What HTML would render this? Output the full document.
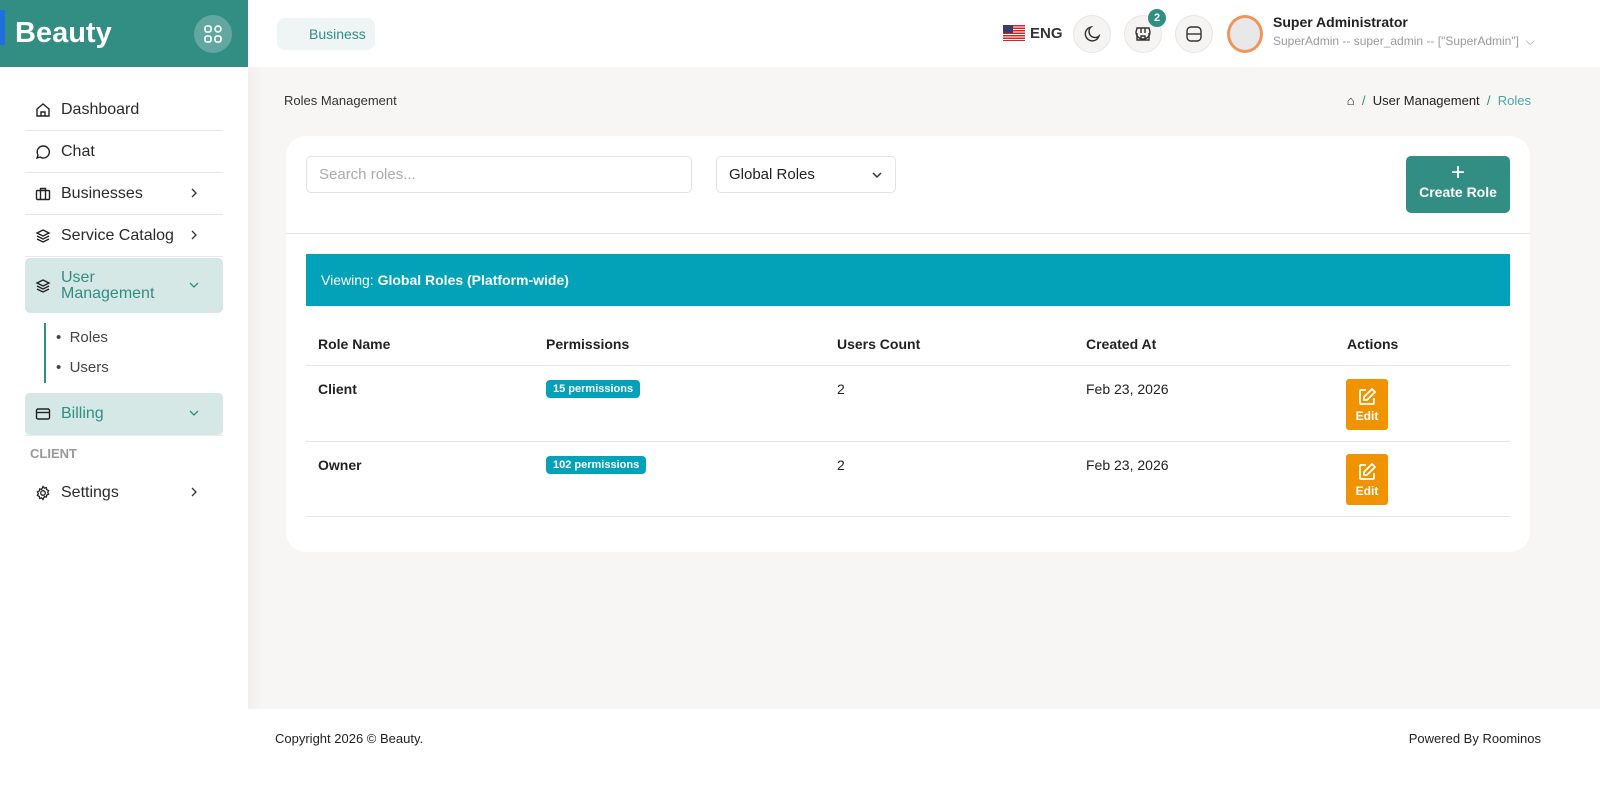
<!DOCTYPE html>
<html><head><meta charset="utf-8"><style>
*{box-sizing:border-box;margin:0;padding:0}
body{width:1600px;height:792px;overflow:hidden;background:#f7f6f4;font-family:"Liberation Sans",sans-serif;color:#222;position:relative;font-size:14px}
.abs{position:absolute}
.side{left:0;top:0;width:248px;height:792px;background:#fff;box-shadow:2px 0 18px rgba(0,0,0,.05)}
.logo{left:0;top:0;width:248px;height:67px;background:#328d83}
.nav{position:absolute;left:25px;width:198px;height:42px;display:flex;align-items:center;font-size:16px;color:#2a2a2a;border-bottom:1px solid #e8e8e8}
.nav svg{margin:0 10px 0 10px}
.nav .ch{position:absolute;right:12px;top:13px}
.act{background:#d5e8e6;color:#328d83;border-radius:5px;border-bottom:none}
.top{left:248px;top:0;width:1352px;height:67px;background:#fff}
.circ{width:38px;height:38px;border-radius:50%;background:#f5f4f2;border:1px solid #e6e6e6;display:flex;align-items:center;justify-content:center}
.card{left:286px;top:136px;width:1244px;height:416px;background:#fff;border-radius:20px}
.edit{width:42px;height:51px;background:#ef9400;border-radius:3px;color:#fff;font-size:12px;font-weight:bold;display:flex;flex-direction:column;align-items:center;justify-content:center;gap:2px}
.badge{background:#03a2b8;color:#fff;font-size:11px;font-weight:bold;padding:3px 7px;border-radius:4px;display:inline-block}
</style></head><body>
<div class="abs side"></div>
<div class="abs logo"><div class="abs" style="left:0;top:10px;width:5px;height:35px;background:#1f6fe0"></div>
<div class="abs" style="left:15px;top:17px;color:#fff;font-size:29px;font-weight:bold">Beauty</div>
<div class="abs" style="left:194px;top:15px;width:38px;height:38px;border-radius:50%;background:#62a8a0;display:flex;align-items:center;justify-content:center">
<svg width="18" height="18" viewBox="0 0 18 18" fill="none" stroke="#fff" stroke-width="1.6"><rect x="1" y="1" width="6" height="6" rx="2"/><rect x="11" y="1" width="6" height="6" rx="3"/><rect x="1" y="11" width="6" height="6" rx="2"/><rect x="11" y="11" width="6" height="6" rx="2"/></svg></div></div>
<div class="nav" style="top:89px"><svg width="16" height="16" viewBox="0 0 16 16" fill="none" stroke="#222" stroke-width="1.4"><path d="M2 7L8 2l6 5v7H2z"/><path d="M6 14V10h4v4"/></svg>Dashboard</div>
<div class="nav" style="top:131px"><svg width="16" height="16" viewBox="0 0 16 16" fill="none" stroke="#222" stroke-width="1.4"><path d="M8 2a6 6 0 1 1-3 11l-3 1 1-3A6 6 0 0 1 8 2z"/></svg>Chat</div>
<div class="nav" style="top:173px"><svg width="16" height="16" viewBox="0 0 16 16" fill="none" stroke="#222" stroke-width="1.4"><rect x="1.5" y="4.5" width="13" height="9" rx="1"/><path d="M5.5 4.5V2.5h5v2M5.5 4.5v9M10.5 4.5v9"/></svg>Businesses<svg class="ch" width="14" height="14" viewBox="0 0 14 14" fill="none" stroke="#333" stroke-width="1.3"><path d="M5 3l4 4-4 4"/></svg></div>
<div class="nav" style="top:215px"><svg width="16" height="16" viewBox="0 0 16 16" fill="none" stroke="#222" stroke-width="1.4"><path d="M8 2l6 3-6 3-6-3z"/><path d="M2 8l6 3 6-3M2 11l6 3 6-3"/></svg>Service Catalog<svg class="ch" width="14" height="14" viewBox="0 0 14 14" fill="none" stroke="#333" stroke-width="1.3"><path d="M5 3l4 4-4 4"/></svg></div>
<div class="nav act" style="top:258px;height:55px;line-height:16px"><svg width="16" height="16" viewBox="0 0 16 16" fill="none" stroke="#222" stroke-width="1.4"><path d="M8 2l6 3-6 3-6-3z"/><path d="M2 8l6 3 6-3M2 11l6 3 6-3"/></svg><span>User<br>Management</span><svg class="ch" style="top:20px" width="14" height="14" viewBox="0 0 14 14" fill="none" stroke="#328d83" stroke-width="1.3"><path d="M3 5l4 4 4-4"/></svg></div>
<div class="abs" style="left:44px;top:323px;width:2px;height:60px;background:#328d83"></div>
<div class="abs" style="left:56px;top:329px;font-size:15px;color:#444">•&nbsp; Roles</div>
<div class="abs" style="left:56px;top:359px;font-size:15px;color:#444">•&nbsp; Users</div>
<div class="nav act" style="top:393px"><svg width="16" height="16" viewBox="0 0 16 16" fill="none" stroke="#222" stroke-width="1.4"><rect x="1.5" y="3" width="13" height="10" rx="1.5"/><path d="M1.5 6.5h13"/></svg>Billing<svg class="ch" width="14" height="14" viewBox="0 0 14 14" fill="none" stroke="#328d83" stroke-width="1.3"><path d="M3 5l4 4 4-4"/></svg></div>
<div class="abs" style="left:25px;top:435px;width:198px;border-top:1px solid #e8e8e8"></div>
<div class="abs" style="left:30px;top:446px;font-size:13px;font-weight:bold;color:#999">CLIENT</div>
<div class="nav" style="top:472px;border:none"><svg width="16" height="16" viewBox="0 0 16 16" fill="none" stroke="#222" stroke-width="1.3"><circle cx="8" cy="8" r="2.3"/><path d="M8 1.5l1.3 1.6 2-.5.4 2 1.9.9-.9 1.9.9 1.8-1.9.9-.4 2-2-.5L8 14.5l-1.3-1.6-2 .5-.4-2-1.9-.9.9-1.8-.9-1.9 1.9-.9.4-2 2 .5z"/></svg>Settings<svg class="ch" width="14" height="14" viewBox="0 0 14 14" fill="none" stroke="#333" stroke-width="1.3"><path d="M5 3l4 4-4 4"/></svg></div>

<div class="abs top"></div>
<div class="abs" style="left:277px;top:18px;width:98px;height:32px;border-radius:8px;background:#eef5f4;color:#328d83;font-size:14px;padding:8px 0 0 32px">Business</div>
<div class="abs" style="left:1003px;top:25px;width:22px;height:16px;background:repeating-linear-gradient(#d22 0 1.3px,#fff 1.3px 2.5px)"><div style="width:10px;height:8px;background:#3c3b6e"></div></div>
<div class="abs" style="left:1030px;top:25px;font-size:15px;font-weight:bold;color:#333">ENG</div>
<div class="abs circ" style="left:1073px;top:15px"><svg width="18" height="18" viewBox="0 0 18 18" fill="none" stroke="#333" stroke-width="1.4"><path d="M8 2a7 7 0 1 0 8 9A6 6 0 0 1 8 2z"/></svg></div>
<div class="abs circ" style="left:1124px;top:15px"><svg width="18" height="18" viewBox="0 0 18 18" fill="none" stroke="#333" stroke-width="1.4"><path d="M3 3h12l1 4a2 2 0 0 1-14 0z"/><path d="M3 8v7h12V8M7 15v-4h4v4M7 3v5M11 3v5"/></svg></div>
<div class="abs" style="left:1148px;top:9px;width:18px;height:18px;border-radius:50%;background:#328d83;color:#fff;font-size:11px;font-weight:bold;text-align:center;line-height:18px">2</div>
<div class="abs circ" style="left:1175px;top:15px"><svg width="18" height="18" viewBox="0 0 18 18" fill="none" stroke="#333" stroke-width="1.4"><rect x="2" y="2" width="14" height="14" rx="4"/><path d="M2 9h14"/></svg></div>
<div class="abs" style="left:1227px;top:15px;width:36px;height:38px;border-radius:50%;background:#e8e8e8;border:3px solid #f0955a"></div>
<div class="abs" style="left:1273px;top:14px;font-size:14px;font-weight:bold;color:#222">Super Administrator</div>
<div class="abs" style="left:1273px;top:34px;font-size:12px;color:#999">SuperAdmin -- super_admin -- ["SuperAdmin"] &nbsp;⌵</div>

<div class="abs" style="left:284px;top:93px;font-size:13px;color:#333">Roles Management</div>
<div class="abs" style="right:69px;top:93px;font-size:13px;color:#222">⌂ &nbsp;<span style="color:#328d83">/</span>&nbsp; User Management &nbsp;<span style="color:#328d83">/</span>&nbsp; <span style="color:#4aa5a5">Roles</span></div>

<div class="abs card">
<div class="abs" style="left:20px;top:20px;width:386px;height:37px;border:1px solid #e2e2e2;border-radius:5px;padding:9px 12px;color:#aaa;font-size:15px">Search roles...</div>
<div class="abs" style="left:430px;top:20px;width:180px;height:37px;border:1px solid #e2e2e2;border-radius:5px;padding:9px 12px;color:#222;font-size:15px">Global Roles<svg style="position:absolute;right:12px;top:13px" width="12" height="10" viewBox="0 0 12 10" fill="none" stroke="#333" stroke-width="1.5"><path d="M2 3l4 4 4-4"/></svg></div>
<div class="abs" style="left:1120px;top:20px;width:104px;height:57px;background:#328d83;border-radius:5px;color:#fff;text-align:center;font-size:14px;font-weight:bold;padding-top:6px"><div style="font-size:24px;font-weight:normal;line-height:22px">+</div>Create Role</div>
<div class="abs" style="left:0;top:97px;width:1244px;border-top:1px solid #e5e5e5"></div>
<div class="abs" style="left:20px;top:118px;width:1204px;height:52px;background:#03a2b8;color:#fff;font-size:14px;padding:18px 15px">Viewing: <b>Global Roles (Platform-wide)</b></div>
<div class="abs" style="left:20px;top:190px;width:1204px;height:40px;border-bottom:1px solid #e5e5e5;font-weight:bold;font-size:14px">
<span class="abs" style="left:12px;top:10px">Role Name</span><span class="abs" style="left:240px;top:10px">Permissions</span><span class="abs" style="left:531px;top:10px">Users Count</span><span class="abs" style="left:780px;top:10px">Created At</span><span class="abs" style="left:1041px;top:10px">Actions</span></div>
<div class="abs" style="left:20px;top:230px;width:1204px;height:76px;border-bottom:1px solid #e5e5e5;font-size:14px">
<b class="abs" style="left:12px;top:15px">Client</b><span class="abs badge" style="left:240px;top:14px">15 permissions</span><span class="abs" style="left:531px;top:15px">2</span><span class="abs" style="left:780px;top:15px">Feb 23, 2026</span>
<div class="abs edit" style="left:1040px;top:13px"><svg width="20" height="20" viewBox="0 0 20 20" fill="none" stroke="#fff" stroke-width="1.8"><path d="M9 3H4a1 1 0 0 0-1 1v12a1 1 0 0 0 1 1h12a1 1 0 0 0 1-1v-5"/><path d="M15 2l3 3-8 8H7v-3z"/></svg>Edit</div></div>
<div class="abs" style="left:20px;top:306px;width:1204px;height:75px;border-bottom:1px solid #e5e5e5;font-size:14px">
<b class="abs" style="left:12px;top:15px">Owner</b><span class="abs badge" style="left:240px;top:14px">102 permissions</span><span class="abs" style="left:531px;top:15px">2</span><span class="abs" style="left:780px;top:15px">Feb 23, 2026</span>
<div class="abs edit" style="left:1040px;top:12px"><svg width="20" height="20" viewBox="0 0 20 20" fill="none" stroke="#fff" stroke-width="1.8"><path d="M9 3H4a1 1 0 0 0-1 1v12a1 1 0 0 0 1 1h12a1 1 0 0 0 1-1v-5"/><path d="M15 2l3 3-8 8H7v-3z"/></svg>Edit</div></div>
</div>

<div class="abs" style="left:248px;top:709px;width:1352px;height:83px;background:#fff"></div>
<div class="abs" style="left:275px;top:731px;font-size:13px;color:#222">Copyright 2026 © Beauty.</div>
<div class="abs" style="right:59px;top:731px;font-size:13px;color:#222">Powered By Roominos</div>
</body></html>
